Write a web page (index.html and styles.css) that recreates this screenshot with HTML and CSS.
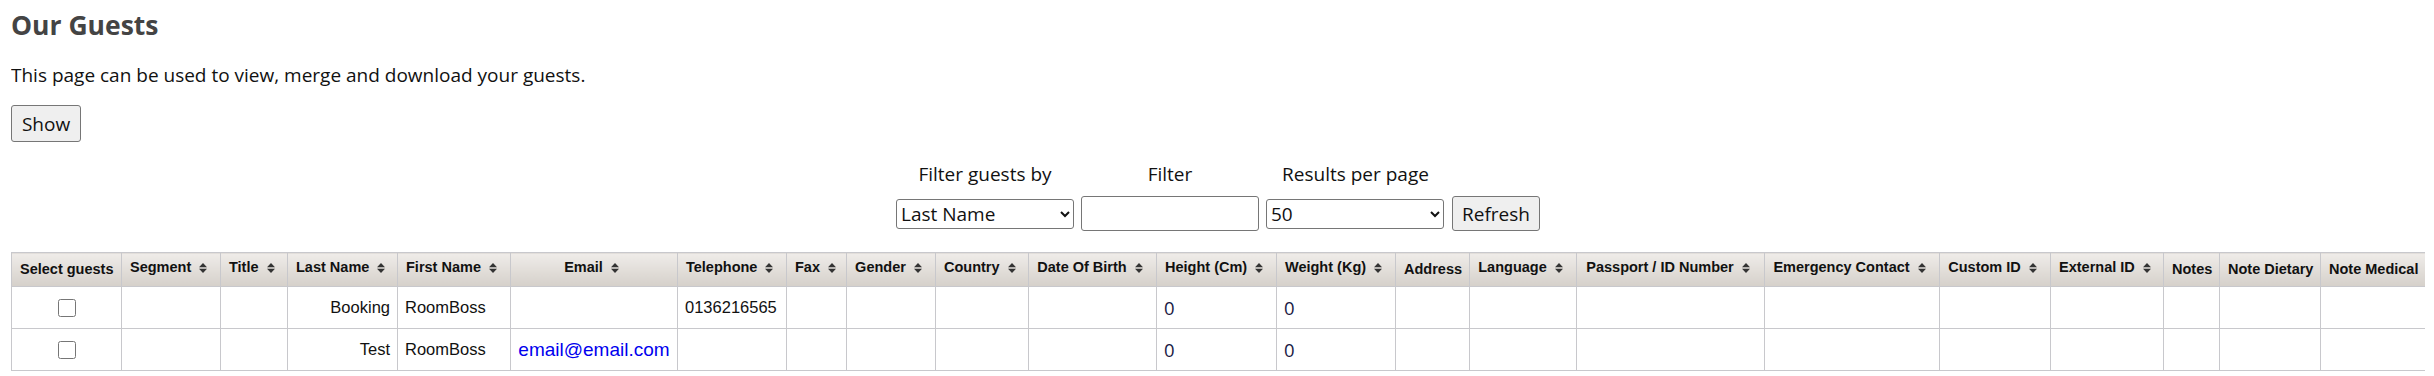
FILE: index.html
```html
<!DOCTYPE html>
<html lang="en">
<head>
    <title>Our Guests</title>
    <link rel="stylesheet" href="styles.css">
</head>
<body>
    <h1>Our Guests</h1>
    <p class="intro">This page can be used to view, merge and download your guests.</p>
    <div class="show-row">
        <button class="btn">Show</button>
    </div>
    <div class="filtro">
        <label for="filtro-campo">Filter guests by</label>
        <label for="filtro-texto">Filter</label>
        <label for="filtro-pagina">Results per page</label>
        <span></span>
        <select id="filtro-campo" class="campo">
            <option>Last Name</option>
            <option>First Name</option>
            <option>Email</option>
        </select>
        <input type="text" id="filtro-texto" class="campo texto">
        <select id="filtro-pagina" class="campo">
            <option>50</option>
            <option>100</option>
        </select>
        <button class="btn refrescar">Refresh</button>
    </div>
    <table class="huespedes">
        <colgroup>
            <col class="w110"><col class="w99"><col class="w67"><col class="w110"><col class="w113">
            <col class="w167"><col class="w109"><col class="w60"><col class="w89"><col class="w93">
            <col class="w128"><col class="w120"><col class="w119"><col class="w74"><col class="w107">
            <col class="w188"><col class="w175"><col class="w111"><col class="w113"><col class="w56">
            <col class="w101"><col class="w105">
        </colgroup>
        <thead>
            <tr>
                <th>Select guests</th>
                <th class="orden">Segment<svg class="flechas" viewBox="0 0 8 10"><path d="M0 4.3L4 0L8 4.3Z M0 5.7L8 5.7L4 10Z"/></svg></th>
                <th class="orden">Title<svg class="flechas" viewBox="0 0 8 10"><path d="M0 4.3L4 0L8 4.3Z M0 5.7L8 5.7L4 10Z"/></svg></th>
                <th class="orden">Last Name<svg class="flechas" viewBox="0 0 8 10"><path d="M0 4.3L4 0L8 4.3Z M0 5.7L8 5.7L4 10Z"/></svg></th>
                <th class="orden">First Name<svg class="flechas" viewBox="0 0 8 10"><path d="M0 4.3L4 0L8 4.3Z M0 5.7L8 5.7L4 10Z"/></svg></th>
                <th class="orden">Email<svg class="flechas" viewBox="0 0 8 10"><path d="M0 4.3L4 0L8 4.3Z M0 5.7L8 5.7L4 10Z"/></svg></th>
                <th class="orden">Telephone<svg class="flechas" viewBox="0 0 8 10"><path d="M0 4.3L4 0L8 4.3Z M0 5.7L8 5.7L4 10Z"/></svg></th>
                <th class="orden">Fax<svg class="flechas" viewBox="0 0 8 10"><path d="M0 4.3L4 0L8 4.3Z M0 5.7L8 5.7L4 10Z"/></svg></th>
                <th class="orden">Gender<svg class="flechas" viewBox="0 0 8 10"><path d="M0 4.3L4 0L8 4.3Z M0 5.7L8 5.7L4 10Z"/></svg></th>
                <th class="orden">Country<svg class="flechas" viewBox="0 0 8 10"><path d="M0 4.3L4 0L8 4.3Z M0 5.7L8 5.7L4 10Z"/></svg></th>
                <th class="orden">Date Of Birth<svg class="flechas" viewBox="0 0 8 10"><path d="M0 4.3L4 0L8 4.3Z M0 5.7L8 5.7L4 10Z"/></svg></th>
                <th class="orden">Height (Cm)<svg class="flechas" viewBox="0 0 8 10"><path d="M0 4.3L4 0L8 4.3Z M0 5.7L8 5.7L4 10Z"/></svg></th>
                <th class="orden">Weight (Kg)<svg class="flechas" viewBox="0 0 8 10"><path d="M0 4.3L4 0L8 4.3Z M0 5.7L8 5.7L4 10Z"/></svg></th>
                <th>Address</th>
                <th class="orden">Language<svg class="flechas" viewBox="0 0 8 10"><path d="M0 4.3L4 0L8 4.3Z M0 5.7L8 5.7L4 10Z"/></svg></th>
                <th class="orden">Passport / ID Number<svg class="flechas" viewBox="0 0 8 10"><path d="M0 4.3L4 0L8 4.3Z M0 5.7L8 5.7L4 10Z"/></svg></th>
                <th class="orden">Emergency Contact<svg class="flechas" viewBox="0 0 8 10"><path d="M0 4.3L4 0L8 4.3Z M0 5.7L8 5.7L4 10Z"/></svg></th>
                <th class="orden">Custom ID<svg class="flechas" viewBox="0 0 8 10"><path d="M0 4.3L4 0L8 4.3Z M0 5.7L8 5.7L4 10Z"/></svg></th>
                <th class="orden">External ID<svg class="flechas" viewBox="0 0 8 10"><path d="M0 4.3L4 0L8 4.3Z M0 5.7L8 5.7L4 10Z"/></svg></th>
                <th>Notes</th>
                <th>Note Dietary</th>
                <th>Note Medical</th>
            </tr>
        </thead>
        <tbody>
            <tr>
                <td class="centro"><input type="checkbox" class="marca"></td>
                <td></td>
                <td></td>
                <td class="derecha">Booking</td>
                <td>RoomBoss</td>
                <td class="centro"></td>
                <td>0136216565</td>
                <td></td>
                <td></td>
                <td></td>
                <td></td>
                <td class="numero">0</td>
                <td class="numero">0</td>
                <td></td><td></td><td></td><td></td><td></td><td></td><td></td><td></td><td></td>
            </tr>
            <tr>
                <td class="centro"><input type="checkbox" class="marca"></td>
                <td></td>
                <td></td>
                <td class="derecha">Test</td>
                <td>RoomBoss</td>
                <td class="centro"><a href="#" class="correo">email@email.com</a></td>
                <td></td>
                <td></td>
                <td></td>
                <td></td>
                <td></td>
                <td class="numero">0</td>
                <td class="numero">0</td>
                <td></td><td></td><td></td><td></td><td></td><td></td><td></td><td></td><td></td>
            </tr>
        </tbody>
    </table>
</body>
</html>
```
FILE: styles.css
```css
body {
    font-family: "Open Sans", "Noto Sans", sans-serif;
    font-size: 19px;
    color: #111;
    background-color: #fff;
    margin: 0 9px 0 11px;
}
h1 {
    margin: 5px 0 0;
    font-size: 26.5px;
    line-height: 40px;
    font-weight: bold;
    color: #444;
}
.intro {
    margin: 18px 0 0;
    line-height: 24px;
}
.show-row {
    margin-top: 18px;
}
.btn {
    font-family: "Open Sans", "Noto Sans", sans-serif;
    font-size: 19px;
    color: #111;
    background-color: #efefef;
    border: 1px solid #767676;
    border-radius: 3px;
    height: 37px;
    width: 70px;
    padding: 0;
    margin: 0;
}
.filtro {
    display: grid;
    grid-template-columns: 178px 178px 179px 88px;
    column-gap: 7px;
    justify-content: center;
    align-items: center;
    margin-top: 20px;
}
.filtro label {
    text-align: center;
    line-height: 24px;
    margin-bottom: 10px;
}
.campo {
    font-family: "Open Sans", "Noto Sans", sans-serif;
    font-size: 19px;
    color: #111;
    height: 30px;
    width: 178px;
    border: 1px solid #767676;
    border-radius: 3px;
    background-color: #fff;
    box-sizing: border-box;
    margin: 0;
}
.texto {
    height: 35px;
    width: 178px;
    padding: 0 5px;
}
.refrescar {
    width: 88px;
    height: 35px;
}
.huespedes {
    margin-top: 21px;
    width: 100%;
    table-layout: fixed;
    border-collapse: collapse;
    font-family: "Liberation Sans", Arial, sans-serif;
}
.huespedes th {
    font-size: 14.5px;
    font-weight: bold;
    color: #111;
    line-height: 17px;
    padding: 8px;
    text-align: center;
    white-space: nowrap;
    border: 1px solid #c8c8cc;
    background: linear-gradient(to bottom, #efece9, #d5d0ca);
}
.huespedes th.orden {
    padding: 6px 13px 10px 8px;
}
.flechas {
    width: 8px;
    height: 10px;
    margin-left: 8px;
    fill: #333;
    vertical-align: -1px;
}
.huespedes td {
    font-size: 16.5px;
    color: #111;
    height: 41px;
    padding: 0 7px;
    border: 1px solid #c8c8cc;
    white-space: nowrap;
}
.huespedes .centro {
    text-align: center;
}
.huespedes .derecha {
    text-align: right;
}
.huespedes .numero {
    font-family: "Open Sans", "Noto Sans", sans-serif;
    font-size: 18.5px;
    color: #1a1a44;
}
.marca {
    width: 18px;
    height: 18px;
    margin: 0;
    vertical-align: middle;
}
.correo {
    font-size: 19px;
    color: #0000ee;
    text-decoration: none;
}
.w56 { width: 56px; }
.w60 { width: 60px; }
.w67 { width: 67px; }
.w74 { width: 74px; }
.w89 { width: 89px; }
.w93 { width: 93px; }
.w99 { width: 99px; }
.w101 { width: 101px; }
.w105 { width: 105px; }
.w107 { width: 107px; }
.w109 { width: 109px; }
.w110 { width: 110px; }
.w111 { width: 111px; }
.w113 { width: 113px; }
.w119 { width: 119px; }
.w120 { width: 120px; }
.w128 { width: 128px; }
.w167 { width: 167px; }
.w175 { width: 175px; }
.w188 { width: 188px; }
```
